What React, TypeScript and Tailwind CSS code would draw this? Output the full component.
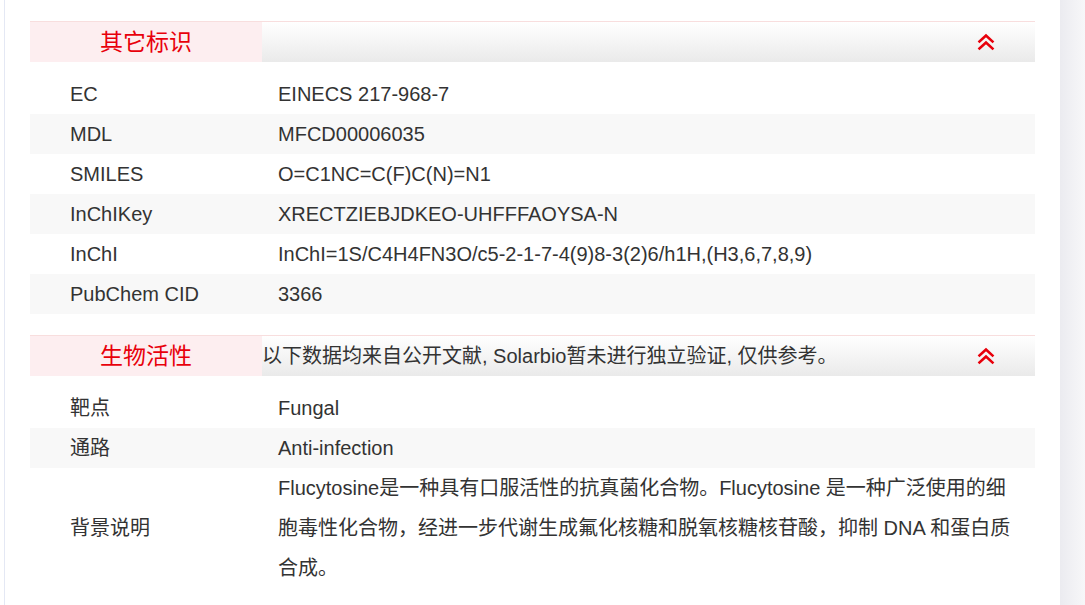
import React from "react";

const Chevrons = () => (
  <svg width="18" height="18" viewBox="0 0 18 18" fill="none" stroke="#e8000b" strokeWidth="2.6" strokeLinecap="square">
    <polyline points="2.5,8.5 9,2.5 15.5,8.5" />
    <polyline points="2.5,15.5 9,9.5 15.5,15.5" />
  </svg>
);

const Header = ({ title, note }: { title: string; note?: string }) => (
  <div className="flex h-[41px] border-t border-[#f8dede]">
    <div className="w-[232px] shrink-0 bg-[#fdeef0] flex items-center justify-center text-[#e8000b] text-[23px]">
      {title}
    </div>
    <div className="flex-1 bg-gradient-to-b from-white to-[#eaeaea] flex items-center justify-between pr-[40px]">
      <span className="text-[20px] text-[#333]">{note ?? ""}</span>
      <Chevrons />
    </div>
  </div>
);

const Row = ({ label, value, alt }: { label: string; value: string; alt?: boolean }) => (
  <div className={`flex h-10 items-center ${alt ? "bg-[#f8f8f8]" : "bg-white"}`}>
    <div className="w-[232px] shrink-0 pl-[40px]">{label}</div>
    <div className="flex-1 pl-[16px]">{value}</div>
  </div>
);

export default function App() {
  const ids: [string, string][] = [
    ["EC", "EINECS 217-968-7"],
    ["MDL", "MFCD00006035"],
    ["SMILES", "O=C1NC=C(F)C(N)=N1"],
    ["InChIKey", "XRECTZIEBJDKEO-UHFFFAOYSA-N"],
    ["InChI", "InChI=1S/C4H4FN3O/c5-2-1-7-4(9)8-3(2)6/h1H,(H3,6,7,8,9)"],
    ["PubChem CID", "3366"],
  ];
  return (
    <div className="flex w-[1085px] h-[605px] overflow-hidden bg-white text-[#333] text-[20px] font-['Liberation_Sans','Noto_Sans_CJK_SC',sans-serif]">
      <div className="w-[4px] shrink-0" />
      <div className="w-px shrink-0 bg-[#e4e8f4]" />
      <div className="w-[1055px] shrink-0 px-[25px] pt-[21px]">
        <Header title="其它标识" />
        <div className="mt-[12px]">
          {ids.map(([l, v], i) => (
            <Row key={l} label={l} value={v} alt={i % 2 === 1} />
          ))}
        </div>
        <div className="mt-[21px]">
          <Header title="生物活性" note="以下数据均来自公开文献, Solarbio暂未进行独立验证, 仅供参考。" />
        </div>
        <div className="mt-[12px]">
          <Row label="靶点" value="Fungal" />
          <Row label="通路" value="Anti-infection" alt />
          <div className="flex items-center bg-white">
            <div className="w-[232px] shrink-0 pl-[40px]">背景说明</div>
            <div className="flex-1 pl-[16px]">
              <div className="w-[740px] leading-[40px]">
                Flucytosine是一种具有口服活性的抗真菌化合物。Flucytosine 是一种广泛使用的细胞毒性化合物，经进一步代谢生成氟化核糖和脱氧核糖核苷酸，抑制 DNA 和蛋白质合成。
              </div>
            </div>
          </div>
        </div>
      </div>
      <div className="flex-1 bg-gradient-to-r from-[#ebebf0] to-[#f7f7f9]" />
    </div>
  );
}
